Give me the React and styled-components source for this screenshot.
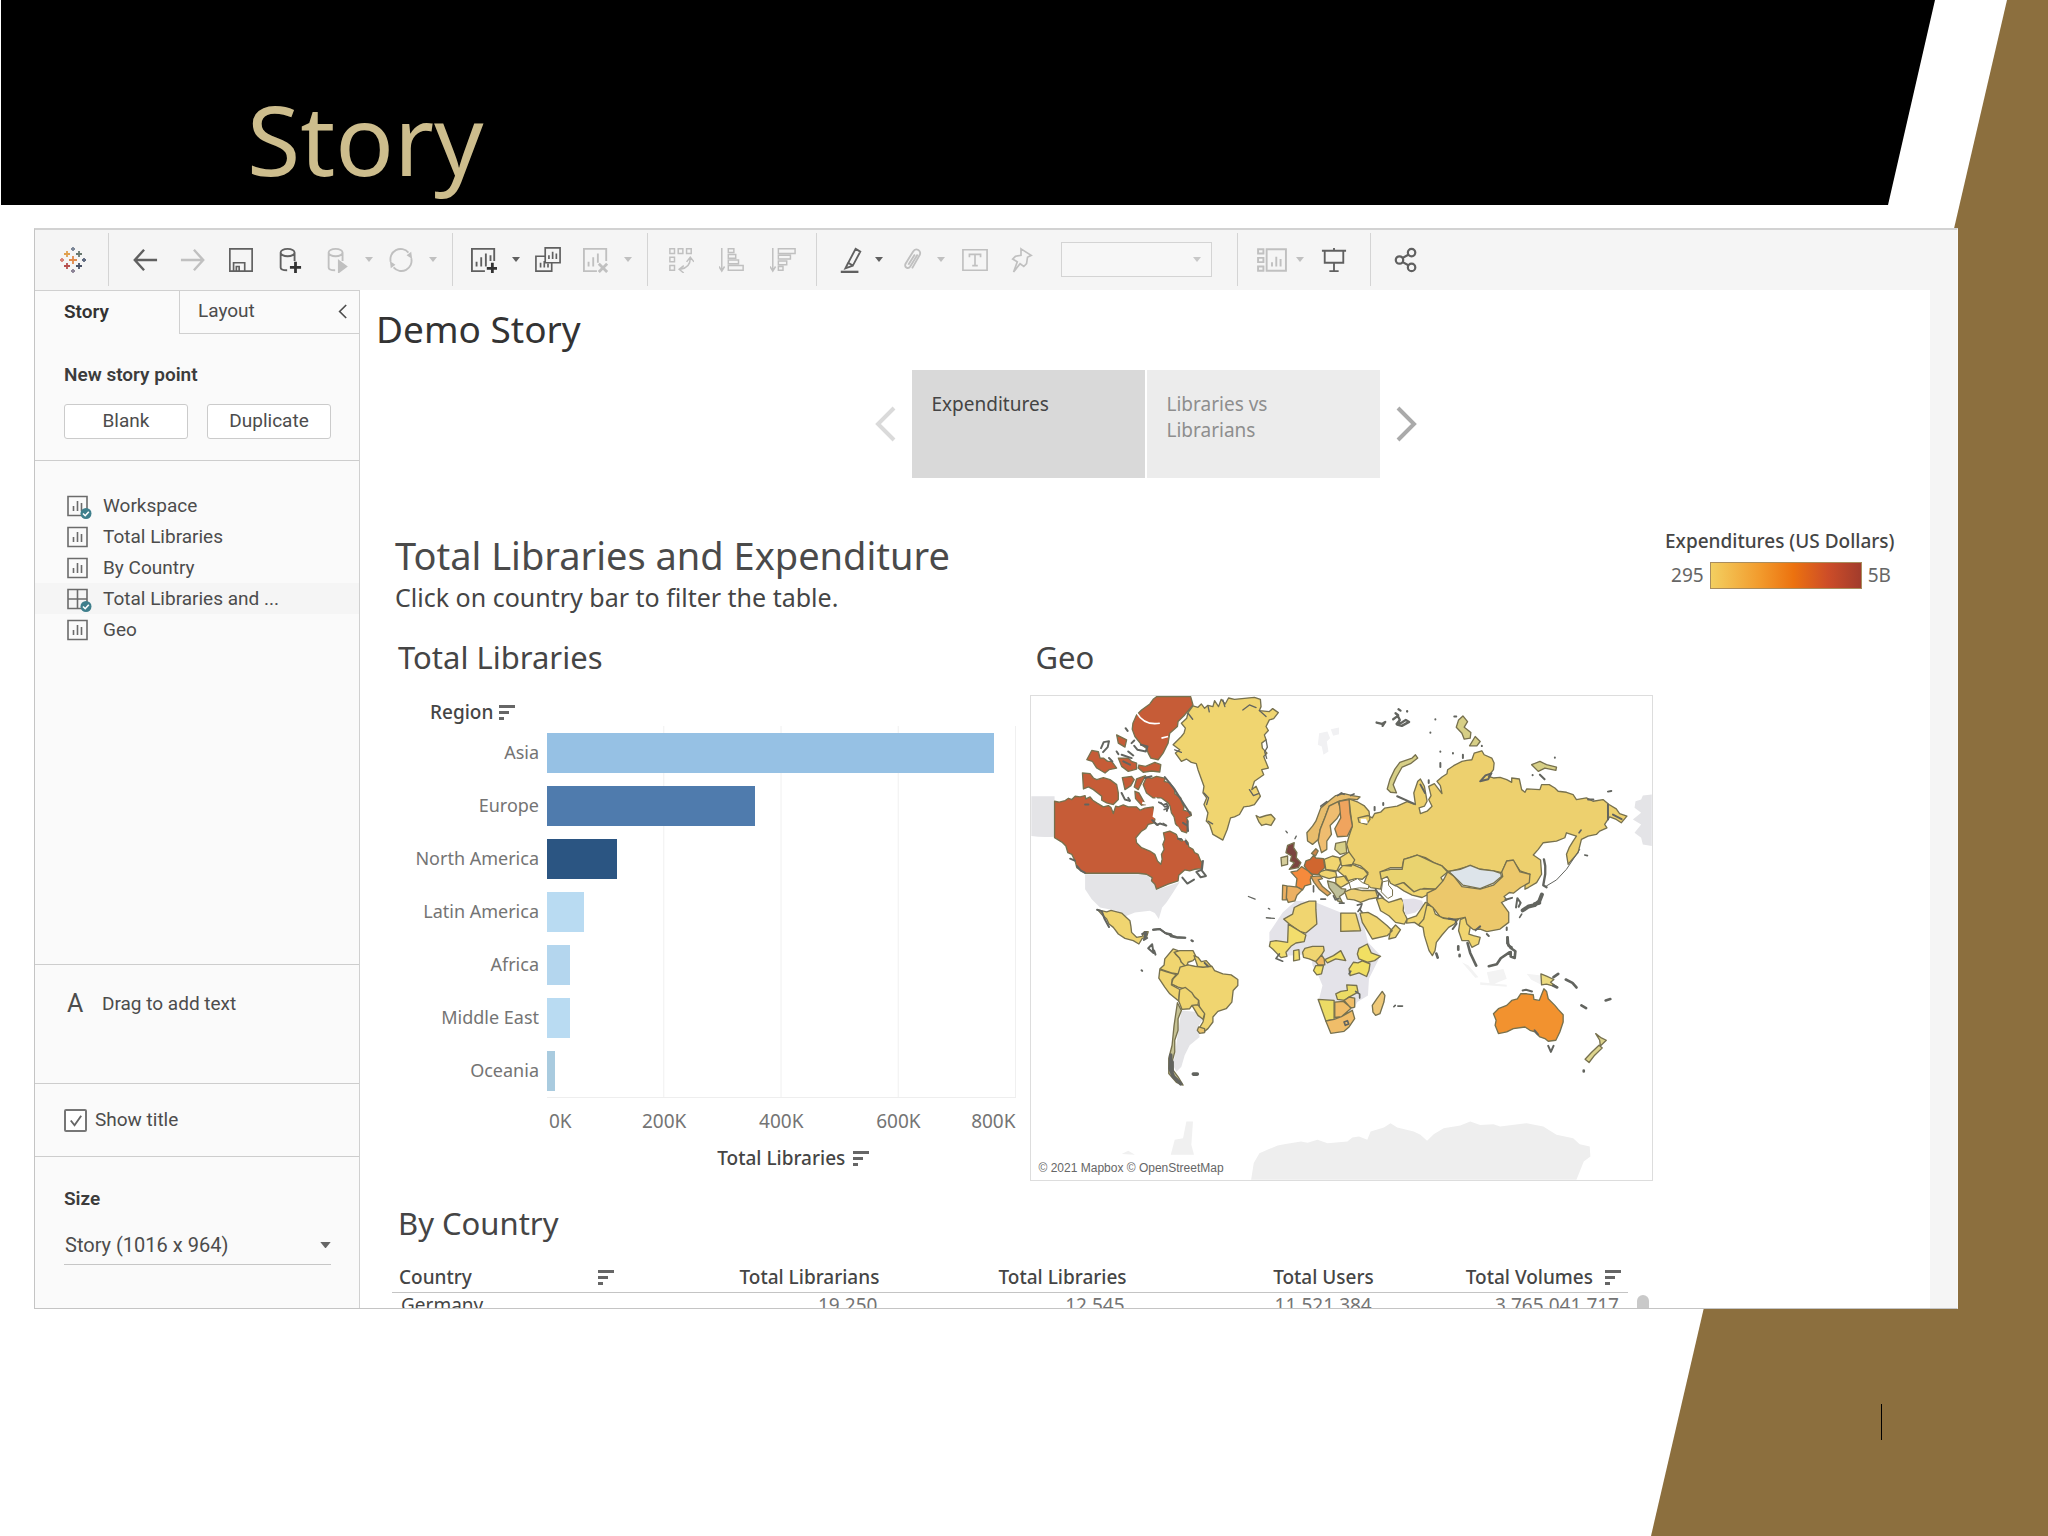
import React, {useState} from 'react';
import styled, {createGlobalStyle, css} from 'styled-components';

const regions = [
  {name: 'Asia', value: 764, color: '#96c1e4'},
  {name: 'Europe', value: 355, color: '#4f7bad'},
  {name: 'North America', value: 119, color: '#2b5582'},
  {name: 'Latin America', value: 63, color: '#b9dbf2'},
  {name: 'Africa', value: 40, color: '#b4d6ee'},
  {name: 'Middle East', value: 40, color: '#b9dbf2'},
  {name: 'Oceania', value: 13, color: '#a9cbdf'},
];

const sheets = [
  {name: 'Workspace', used: true},
  {name: 'Total Libraries'},
  {name: 'By Country'},
  {name: 'Total Libraries and ...', used: true, board: true},
  {name: 'Geo'},
];

const GlobalStyle = createGlobalStyle`
  * { box-sizing: border-box; }
  body { margin: 0; background: #fff; }
  button, input, select { font: inherit; color: inherit; }
  h1, h2, h3, p, ul { margin: 0; padding: 0; font-weight: 400; }
`

/* slide */

const Slide = styled.div`
  position: relative;
  display: flex;
  flex-direction: column;
  height: 100vh;
  min-height: 900px;
  overflow: hidden;
  background: #fff;
`

const Stripe = styled.div`
  position: absolute;
  inset: 0;
  background: #8c6f3e;
  clip-path: polygon(calc(100% - 41px) 0, 100% 0, 100% 100%, calc(100% - 397px) 100%);
`

const SlideHeader = styled.header`
  position: relative;
  flex: none;
  display: flex;
  align-items: flex-end;
  height: 205px;
  padding: 0 0 8px 247px;
  background: #000;
  clip-path: polygon(1px 0, calc(100% - 113px) 0, calc(100% - 160px) 100%, 1px 100%);
`

const SlideTitle = styled.h1`
  color: #cdbd8d;
  font-family: 'Noto Sans', 'Open Sans', sans-serif;
  font-size: 97px;
  line-height: 118px;
`

const SlideFooter = styled.footer`
  position: relative;
  flex: none;
  display: flex;
  justify-content: flex-end;
  height: 227px;
  padding: 95px 166px 0 0;
`

const Mark = styled.span`
  width: 1px;
  height: 36px;
  background: #000;
`

/* app window */

const Window = styled.div`
  position: relative;
  flex: 1;
  min-height: 0;
  display: flex;
  flex-direction: column;
  margin: 23px 90px 0 34px;
  background: #f5f5f5;
  border: 1px solid #c4c4c4;
  border-top: 2px solid #d2d2d2;
  border-right-color: #f8f8f8;
  overflow: hidden;
`

const Toolbar = styled.div`
  flex: none;
  display: flex;
  height: 60px;
  padding: 3px 0 4px;
`

const Tool = styled.button`
  flex: none;
  display: flex;
  align-items: center;
  justify-content: center;
  height: 100%;
  padding: 0;
  border: 0;
  background: none;
  color: ${props => props.$off ? '#c0c0c0' : '#606060'};
`

const CaretButton = styled(Tool)`
  width: 16px;
`

const Split = styled.div`
  display: flex;
`

const Group = styled.div`
  flex: none;
  display: flex;
  align-items: center;
  gap: ${props => props.$gap || 0}px;
  padding: 0 ${props => props.$right || 0}px 0 ${props => props.$left || 0}px;
  border-right: ${props => props.$last ? 0 : '1px solid #d4d4d4'};
  height: 100%;

  ${Tool}:not(${CaretButton}) { width: ${props => props.$compact ? 40 : 48}px; }
  ${Split} { height: 100%; }
`

const FitBox = styled.button`
  display: flex;
  align-items: center;
  justify-content: flex-end;
  width: 151px;
  height: 35px;
  margin-left: 14px;
  padding: 0 10px;
  color: #c8c8c8;
  background: #f7f7f7;
  border: 1px solid #d4d4d4;
`

const Body = styled.div`
  flex: 1;
  min-height: 0;
  display: flex;
`

const Sidebar = styled.aside`
  flex: none;
  display: flex;
  flex-direction: column;
  width: 325px;
  background: #fafafa;
  border-top: 1px solid #d0d0d0;
  border-right: 1px solid #d0d0d0;
  color: #4c4c4c;
  font-family: Roboto, 'Liberation Sans', sans-serif;
  font-size: 19px;
  line-height: 30px;
`

const Tabs = styled.div`
  display: flex;
  height: 43px;
`

const Tab = styled.button`
  padding: 0 0 2px;
  border: 0;
  background: none;
  text-align: left;
  ${props => props.$active ? css`
    width: 144px;
    padding-left: 29px;
    color: #333;
    font-weight: 600;
  ` : css`
    flex: 1;
    display: flex;
    align-items: center;
    justify-content: space-between;
    padding-left: 18px;
    padding-right: 12px;
    border-left: 1px solid #d0d0d0;
    border-bottom: 1px solid #d0d0d0;
  `}
`

const Section = styled.section`
  padding: ${props => props.$pad};
  border-bottom: ${props => props.$last ? 0 : '1px solid #cdcdcd'};
  ${props => props.$grow && 'flex: 1; min-height: 0;'}
`

const Label = styled.h3`
  color: #3c3c3c;
  font-size: 19px;
  line-height: 30px;
  font-weight: 600;
`

const Buttons = styled.div`
  display: grid;
  grid-template-columns: 1fr 1fr;
  gap: 19px;
  margin-top: 14px;
`

const Button = styled.button`
  height: 35px;
  padding: 0 0 2px;
  background: #fff;
  border: 1px solid #cbcbcb;
  border-radius: 3px;
`

const SheetRow = styled.li`
  display: flex;
  align-items: center;
  gap: 11px;
  height: 31px;
  padding-left: 31px;
  list-style: none;
  background: ${props => props.$hot ? '#f5f5f5' : 'none'};
`

const DragText = styled.div`
  display: flex;
  align-items: center;
  gap: 19px;
  height: 44px;

  b {
    width: 16px;
    font-size: 25px;
    font-weight: 400;
  }
`

const Check = styled.label`
  display: flex;
  align-items: center;
  gap: 8px;
  height: 24px;

  input {
    appearance: none;
    width: 23px;
    height: 23px;
    margin: 0;
    border: 2px solid #767676;
    border-radius: 2px;
    background: #fff;
  }
  input:checked {
    background: #fff url("data:image/svg+xml,%3Csvg xmlns='http://www.w3.org/2000/svg' viewBox='0 0 20 20'%3E%3Cpath d='M5 10l4 5 7-10' fill='none' stroke='%23666' stroke-width='2'/%3E%3C/svg%3E") center / contain no-repeat;
  }
`

const SizeField = styled.div`
  display: flex;
  align-items: center;
  margin-top: 12px;
  border-bottom: 1px solid #c6c6c6;
  color: #666;

  select {
    flex: 1;
    height: 38px;
    padding: 0 0 0 1px;
    appearance: none;
    border: 0;
    background: none;
    color: #4c4c4c;
    font-size: 20px;
  }
`

/* canvas */

const Canvas = styled.main`
  flex: 1;
  min-width: 0;
  min-height: 0;
  margin-right: 27px;
  padding: 14px 37px 0 32px;
  overflow: hidden;
  background: #fff;
  color: #454545;
  font-family: 'Noto Sans', 'Open Sans', sans-serif;
  font-size: 19px;
  line-height: 28px;
`

const StoryTitle = styled.h2`
  margin-left: -16px;
  color: #333;
  font-size: 37px;
  line-height: 50px;
`

const Navigator = styled.nav`
  display: flex;
  align-items: center;
  justify-content: center;
  gap: 16px;
  margin-top: 16px;
  padding-left: 6px;
`

const NavArrow = styled.button`
  display: flex;
  padding: 0;
  border: 0;
  background: none;
  color: ${props => props.$off ? '#dadada' : '#aaa'};
`

const Points = styled.div`
  display: flex;
  gap: 2px;
`

const Point = styled.button`
  width: 233px;
  height: 108px;
  padding: 21px 60px 0 20px;
  border: 0;
  background: ${props => props.$active ? '#d9d9d9' : '#ececec'};
  color: ${props => props.$active ? '#444' : '#8e8e8e'};
  display: flex;
  text-align: left;
  line-height: 26px;
`

const Dashboard = styled.div`
  display: flex;
  gap: 12px;
  margin-top: 48px;
`

const Main = styled.div`
  flex: 1;
  min-width: 0;
`

const BoardTitle = styled.h2`
  padding: 4px 0 0 3px;
  color: #4a4a4a;
  font-size: 38px;
  line-height: 50px;
`

const Hint = styled.p`
  padding-left: 3px;
  font-size: 25px;
  line-height: 34px;
`

const Charts = styled.div`
  display: grid;
  grid-template-columns: 1fr 1fr;
  gap: 14px;
  margin-top: 22px;
`

const Heading = styled.h3`
  padding-left: 6px;
  font-size: 31px;
  line-height: 42px;
`

const CountryHeading = styled(Heading)`
  margin-top: 21px;
`

const FieldName = styled.div`
  display: flex;
  align-items: center;
  gap: 6px;
  font-weight: 500;
  ${props => props.$axis ? 'justify-content: center; gap: 8px; padding-left: 24px;' : 'margin-top: 20px; padding-left: 38px;'}
`

const ChartBody = styled.div`
  display: grid;
  grid-template-columns: 147px 1fr;
  column-gap: 8px;
`

const RegionNames = styled.div`
  color: #747474;
  text-align: right;
  font-size: 18px;
  line-height: 53px;
`

const Plot = styled.div`
  border-bottom: 1px solid #eee;
  background-image: linear-gradient(to left, #f0f0f0 1px, transparent 1px);
  background-size: 25% 100%;
`

const BarRow = styled.div`
  display: flex;
  align-items: center;
  height: 53px;
`

const Bar = styled.div`
  height: 40px;
`

const Ticks = styled.div`
  grid-column: 2;
  display: grid;
  grid-template-columns: 1fr 2fr 2fr 2fr 1fr;
  color: #747474;
  line-height: 46px;
  text-align: center;

  span:first-child { text-align: left; padding-left: 2px; }
  span:last-child { justify-self: end; }
`

const MapBox = styled.div`
  position: relative;
  margin-top: 17px;
  border: 1px solid #ddd;

  svg { display: block; width: 100%; height: auto; }
`

const Credit = styled.small`
  position: absolute;
  left: 8px;
  bottom: 3px;
  color: #666;
  font-family: 'Liberation Sans', sans-serif;
  font-size: 12px;
  line-height: 18px;
`

const Legend = styled.div`
  flex: none;
  width: 228px;
  padding-top: 1px;
  font-weight: 500;
  white-space: nowrap;
`

const Scale = styled.div`
  display: flex;
  align-items: center;
  justify-content: center;
  gap: 6px;
  margin-top: 6px;
  padding-left: 4px;
  color: #666;
  font-weight: 400;
`

const Ramp = styled.span`
  width: 152px;
  height: 27px;
  border: 1px solid #a98d5e;
  background: linear-gradient(to right, #f3cf60, #f29a2c 33%, #ec720f 55%, #cd4d28 78%, #a23c2c);
`

const TableArea = styled.div`
  display: flex;
  align-items: flex-start;
  gap: 9px;
  margin-top: 19px;
`

const Table = styled.table`
  flex: 1;
  width: 100%;
  border-collapse: collapse;
  table-layout: fixed;

  th {
    height: 29px;
    padding: 0 7px;
    border-bottom: 1px solid #c4c4c4;
    font-weight: 500;
    text-align: right;
    white-space: nowrap;
  }
  td {
    height: 24px;
    padding: 0 9px;
    color: #747474;
    line-height: 24px;
    text-align: right;
  }
  th:first-child, td:first-child { text-align: left; }
  td:first-child { color: #454545; }
`

const Sorted = styled.span`
  display: flex;
  align-items: center;
  justify-content: ${props => props.$spread ? 'space-between' : 'flex-end'};
  gap: 12px;
  padding-right: ${props => props.$spread ? 18 : 0}px;
`

const Thumb = styled.div`
  flex: none;
  width: 12px;
  height: 60px;
  margin-top: 32px;
  margin-right: 4px;
  border-radius: 6px;
  background: #c9c9c9;
`

const Icon = ({children, size = 26, width = 2}) => (
  <svg width={size} height={size} viewBox="0 0 28 28" fill="none" stroke="currentColor" strokeWidth={width}>
    {children}
  </svg>
)

const Caret = ({size = 8}) => (
  <svg width={size} height={size / 2 + 1} viewBox="0 0 8 5"><path d="M0 0h8L4 5z" fill="currentColor" /></svg>
)

const SortIcon = () => (
  <svg width="16" height="15" viewBox="0 0 16 15" fill="#666">
    <path d="M0 0h16v3H0zM0 6h10v3H0zM0 12h5v3H0z" />
  </svg>
)

const plus = (x, y, r, color) => (
  <path key={`${x}-${y}`} d={`M${x - r} ${y}h${2 * r}M${x} ${y - r}v${2 * r}`} stroke={color} />
)

const Logo = () => (
  <Icon size={28} width={1.8}>
    {plus(14, 14, 4, '#e08a4a')}
    {plus(8, 8, 3, '#e0a04e')}
    {plus(20, 8, 3, '#68786f')}
    {plus(8, 20, 3, '#b8504e')}
    {plus(20, 20, 3, '#4b5468')}
    {plus(14, 3, 2, '#7c8798')}
    {plus(14, 25, 2, '#8d8497')}
    {plus(3, 14, 2, '#d88478')}
    {plus(25, 14, 2, '#5f6a80')}
  </Icon>
)

const SheetIcon = ({board, used}) => (
  <svg width="26" height="26" viewBox="0 0 26 26" fill="none" stroke="#6b6b6b" strokeWidth="1.6">
    <path d="M2 3.500h19v19H2z" />
    {board ? <path d="M11.500 3.500v19M2 13h19" /> : <path d="M7.500 18v-5M11.500 18V8M15.500 18v-8" />}
    {used && <>
      <circle cx="20" cy="20.500" r="5.500" fill="#3f7f8c" stroke="none" />
      <path d="M17 20.500l2.200 2.200 3.600-4" stroke="#fff" />
    </>}
  </svg>
)

const Chevron = ({left, width = 22, height = 38, stroke = 4}) => (
  <svg width={width} height={height} viewBox="0 0 22 38" fill="none" stroke="currentColor" strokeWidth={stroke}>
    <path d={left ? 'M20 3L4 19l16 16' : 'M2 3l16 16L2 35'} />
  </svg>
)

const Cylinder = () => <path d="M5 6v16c0 2 3 3 7 3M5 6c0-2 3-4 7.500-4S20 4 20 6s-3 4-7.500 4S5 8 5 6zM20 6v9" />

const Tools = () => (
  <Toolbar role="toolbar">
    <Group $left={14} $right={11}><Tool aria-label="Home"><Logo /></Tool></Group>
    <Group $left={12} $right={11}>
      <Tool aria-label="Undo"><Icon width={2.6}><path d="M27 14H3M13 3L3 14l10 11" /></Icon></Tool>
      <Tool $off aria-label="Redo"><Icon width={2.6}><path d="M1 14h24M15 3l10 11-10 11" /></Icon></Tool>
      <Tool aria-label="Save"><Icon width={1.8}><path d="M2 2h24v24H2zM6 26v-9h12v9M9 26v-5h3v5" /></Icon></Tool>
      <Tool aria-label="New data source"><Icon><Cylinder /><path d="M21 16v12M15 22h12" stroke="#333" strokeWidth="3" /></Icon></Tool>
      <Split>
        <Tool $off aria-label="Run updates"><Icon><Cylinder /><path d="M16 15l8 6-8 6z" fill="currentColor" /></Icon></Tool>
        <CaretButton $off aria-label="Update options"><Caret /></CaretButton>
      </Split>
      <Split>
        <Tool $off aria-label="Refresh"><Icon><path d="M3 16a11 11 0 0 1 19-10M25 12a11 11 0 0 1-19 10" /><path d="M26 13l-6-4 5-4zM2 15l6 4-5 4z" fill="currentColor" stroke="none" /></Icon></Tool>
        <CaretButton $off aria-label="Refresh options"><Caret /></CaretButton>
      </Split>
    </Group>
    <Group $left={7} $right={11}>
      <Split>
        <Tool aria-label="New worksheet"><Icon><path d="M15 26H1V2h24v13M6 21v-5M11 21V11M16 21V7M21 15V9" /><path d="M23 17v11M17 23h11" stroke="#333" strokeWidth="3" /></Icon></Tool>
        <CaretButton aria-label="New sheet options"><Caret /></CaretButton>
      </Split>
      <Tool aria-label="Duplicate"><Icon width={1.8}><path d="M11 1h16v16H11zM11 10H1v16h17v-9M15 13V9M19 13V5M23 13V7M6 22v-5M10 22v-7M14 22v-4" /></Icon></Tool>
      <Split>
        <Tool $off aria-label="Clear sheet"><Icon><path d="M15 26H1V2h24v13M6 21v-5M11 21V11M16 17V7" /><path d="M17 18l9 9M26 18l-9 9" strokeWidth="3" /></Icon></Tool>
        <CaretButton $off aria-label="Clear options"><Caret /></CaretButton>
      </Split>
    </Group>
    <Group $left={9} $right={9} $gap={3}>
      <Tool $off aria-label="Swap rows and columns"><Icon width={1.6}><path d="M2 2h5v5H2zM11 2h5v5h-5zM20 2h5v5h-5zM2 11h5v5H2zM2 20h5v5H2zM24 12c0 8-4 11-11 12M20 16l4-5 4 5M17 20l-5 4 5 4" /></Icon></Tool>
      <Tool $off aria-label="Sort ascending"><Icon width={1.6}><path d="M3 1v24M0 21l3 5 3-5M10 2h6v4h-6zM10 8h8v4h-8zM10 14h11v4H10zM10 20h16v5H10z" /></Icon></Tool>
      <Tool $off aria-label="Sort descending"><Icon width={1.6}><path d="M3 1v24M0 21l3 5 3-5M9 2h18v5H9zM9 9h13v4H9zM9 15h9v4H9zM9 21h5v4H9z" /></Icon></Tool>
    </Group>
    <Group $left={14} $right={25} $gap={6} $compact>
      <Split>
        <Tool aria-label="Highlight"><Icon><path d="M19 2l5 3-8 15-5-3zM11 17l-3 6 8-3" /><path d="M3 27h19" strokeWidth="3" /></Icon></Tool>
        <CaretButton aria-label="Highlight options"><Caret /></CaretButton>
      </Split>
      <Split>
        <Tool $off aria-label="Group members"><Icon><path d="M19 8l-8 13c-2 3-7 1-5-3l8-13c3-5 10-1 7 4l-8 14M16 8L9 19" /></Icon></Tool>
        <CaretButton $off aria-label="Group options"><Caret /></CaretButton>
      </Split>
      <Tool $off aria-label="Show mark labels"><Icon width={1.8}><path d="M1 3h26v22H1zM8 11V8h12v3M14 8v12M11 20h6" /></Icon></Tool>
      <Tool $off aria-label="Fix axes"><Icon width={1.8}><path d="M14 2l11 7-4 2-1 7-3 3-4-3-7 9 4-11-5-3 3-3 6-1z" /></Icon></Tool>
      <FitBox aria-label="Fit"><Caret /></FitBox>
    </Group>
    <Group $left={14} $right={16} $gap={6} $compact>
      <Split>
        <Tool $off aria-label="Show cards"><Icon size={30} width={1.8}><path d="M1 4h5v4H1zM1 12h5v4H1zM1 20h5v4H1zM9 4h18v20H9zM14 20v-4M18 20v-9M22 20v-7" /></Icon></Tool>
        <CaretButton $off aria-label="Card options"><Caret /></CaretButton>
      </Split>
      <Tool aria-label="Presentation mode"><Icon><path d="M1 4h26M4 4v13h20V4M14 1v3M14 17v8M9 26h10" /></Icon></Tool>
    </Group>
    <Group $left={15} $compact $last>
      <Tool aria-label="Share"><Icon width={2.4}><circle cx="7" cy="14" r="4" /><circle cx="20" cy="6" r="4" /><circle cx="20" cy="22" r="4" /><path d="M10 12l7-4M10 16l7 4" /></Icon></Tool>
    </Group>
  </Toolbar>
)

const Country = styled.path`
  fill: ${props => props.$c || '#f0d570'};
  stroke: #77714e;
  stroke-width: 4;
  stroke-linejoin: round;
`

const Land = styled.path`
  fill: ${props => props.$c || '#e4e4e7'};
`

const Isles = styled.path`
  fill: none;
  stroke: #62645f;
  stroke-width: ${props => props.$w || 6};
  stroke-linecap: round;
  stroke-linejoin: round;
`

const red = '#c65c37'
const sand = '#ecc56c'

const WorldMap = () => (
  <svg viewBox="0 0 624 486" role="img" aria-label="Expenditures by country">
    <g transform="translate(-9 -6) scale(.3333)">
      <Land d="M28 320H98V442Q60 445 28 440zM190 555L375 555 390 570 405 602 440 590 475 578 455 610 435 640 422 655 412 690 400 672 385 665 340 670 310 682 285 665 235 655 210 630 190 600z" />
      <Land $c="#f1f1f3" d="M895 130l25-5 8 20-10 10 5 30-15 10-5-25-12-5zM930 118l25-5v20l-18 5z" />
      <Country $c={red} d="M98 335L112 338 130 333 140 326 150 330 160 320 175 322 190 318 192 328 205 322 213 332 225 340 245 352 260 348 268 354 275 372 282 350 290 352 305 346 320 352 345 352 356 362 370 356 395 352 402 380 398 400 380 405 372 418 360 425 343 445 345 460 360 475 385 485 400 495 408 515 418 525 422 510 420 495 428 480 424 465 430 450 426 430 445 425 465 435 470 448 480 455 492 450 500 460 502 472 515 480 520 490 530 495 536 510 542 520 540 538 520 540 505 545 490 542 472 558 470 575 440 585 405 600 400 585 390 575 392 565 375 555 350 552 190 552 165 535 160 515 150 495 138 490 132 470 120 458 98 445z" />
      <Country $c={red} d="M182 250L205 252 215 265 225 270 245 264 265 270 285 285 290 310 290 330 275 345 255 340 240 332 240 320 215 300 200 292 185 298z" />
      <Country $c={red} d="M375 262L390 266 405 260 432 266 428 275 445 280 460 300 460 312 478 325 482 340 488 352 486 362 508 368 510 378 495 385 500 395 496 430 480 425 462 402 458 382 450 370 446 350 440 340 420 325 395 325 375 310 365 285z" />
      <Country $c={red} d="M302 264L330 260 338 270 328 288 310 300zM345 268L372 258 355 290 350 300 338 292zM340 305l12 5 20 35-12 2-18-20z" />
      <Country $c={red} d="M395 28L405 20 508 20 515 45 490 75 470 95 468 110 445 130 440 160 425 190 410 210 388 205 380 190 375 176 360 165 340 140 332 118 334 100 345 75 360 60 385 42z" />
      <Country $c={red} d="M352 226L372 230 400 218 418 225 415 247 390 244 365 248 350 235zM195 210L210 182 230 186 235 205 245 205 258 215 270 215 285 235 262 240 250 250 225 235 212 215zM285 135L315 150 310 172 290 160zM290 205L320 205 330 215 345 220 345 238 320 245 300 230z" />
      <Isles d="M238 175l8-18 16-3-4 18-14 15M262 205l10 10M300 195l30 10M338 168l10 12 25 5 5-15-20-5M312 115l6 8M330 160l8-8M320 185l15 12M285 185l5 8M305 215l20 10M418 340l10 12 12-2-4 14M392 392l14 14 10-4 18 6M300 310l10 20 14 4M485 400l12 8" />
      <Isles d="M320 325l5 8M370 265l20-5M430 262l28 35 24 38 26 40M498 395l2 30M470 448l20 2 8 14M545 515l-3 25M483 565l15 18 20-12M525 548l15-6 14 18-16 4zM145 508l14 6M165 530l12 14 12 6M190 345h10" />
      <path d="M345 68Q368 108 415 100M440 140l-20 5" fill="none" stroke="#fff" strokeWidth="5" />
      <path d="M362 340l22 4M405 330l-8 50 30 20 2-40zM428 400l40 15 22 38" fill="#fff" stroke="#fff" strokeWidth="7" />
      <Isles $w={5} d="M412 338l14 8 10-4 4 14-12 4M395 395l14 12M425 402l10 6" />
      <Country d="M500 68L515 48 530 52 540 42 550 55 560 46 575 50 580 32 592 50 600 28 612 42 622 24 640 28 700 22 718 28 720 50 715 62 745 65 755 56 772 68 758 86 745 90 735 110 742 122 730 135 735 150 722 160 724 175 738 190 728 200 742 235 722 240 728 255 700 275 692 300 705 290 718 320 700 345 685 350 668 352 655 375 640 382 628 385 618 420 605 452 575 435 565 405 555 395 560 370 548 345 556 325 545 310 548 290 530 240 525 222 510 218 495 208 480 215 462 190 475 180 455 165 480 140 488 130 492 115 480 100 496 85z" />
      <Isles $w={4} d="M500 70l14 18M560 48l4 18M605 30l6 20M665 60l20-15 20 8M715 62l20 18M685 300l12 18 15-6M735 150l4 22-8 14 6 20M548 310l14 15-6 20M560 395l14 8M460 180l20 8" />
      <Country $c="#ead277" d="M705 378L716 384 735 378 750 375 762 388 750 408 735 404 722 408 714 398z" />
      <Country $c="#7b4540" d="M800 468L820 460 818 475 828 490 826 505 840 520 832 535 805 540 820 520 808 515 812 500 795 490z" />
      <Country $c="#d5cd9a" d="M780 505L800 500 800 525 782 530z" />
      <Isles $w={4} d="M795 425l4 5M826 440l-4 8M682 622l20 8M736 686l24 2M742 658l4 2" />
      <Country d="M228 662L255 668 268 664 300 672 325 695 328 712 330 730 345 745 362 742 368 728 380 728 375 745 362 748 352 765 335 755 310 748 290 735 275 715 262 705 255 690 242 678z" />
      <Isles d="M226 662l14 4 8 22 14 26M362 735l12-6-6 14M395 722l20-2 16 12 18 4M445 738l20 6 26 2M512 755l2 2" />
    </g>

    <g transform="translate(-9 164) scale(.3333)">
      <Land d="M480 455L530 460 545 480 530 505 535 535 505 560 490 590 480 625 465 640 455 620 460 590 470 520z" />
      <Land $c="#f0f0f0" d="M448 890L460 845 485 840 495 790 515 790 510 860 518 890zM300 888l20-10 20 12z" />
      <Country d="M430 300L455 270 470 275 462 285 475 298 480 310 500 318 470 345 450 342 415 330 428 318z" />
      <Country d="M458 280L475 275 515 275 525 295 515 305 500 310 495 325 480 310 475 298z" />
      <Country d="M518 290L530 295 540 308 555 305 572 325 550 326 530 325z" />
      <Country d="M470 345L476 325 500 318 520 322 545 325 572 322 580 335 605 345 630 348 650 362 650 380 636 395 632 430 615 450 590 458 575 475 575 490 560 510 545 522 530 515 545 490 550 468 535 448 532 425 515 410 490 390 470 385 450 375 455 360z" />
      <Country d="M415 332L438 340 465 347 452 362 450 378 475 392 472 427 445 405 430 385 412 358z" />
      <Country d="M475 392L492 386 512 402 520 415 532 425 530 438 512 440 505 450 482 452 472 427zM512 440L530 438 550 465 545 482 530 470z" />
      <Country $c={sand} d="M532 505L550 510 550 522 535 524 528 515z" />
      <Country $c="#c6c294" d="M468 432L480 455 470 480 470 515 460 545 460 580 452 610 455 635 470 655 485 680 465 672 442 645 442 600 452 560 458 500z" />
      <Isles $w={11} d="M448 590l-2 40 10 24 22 22M452 610v30M516 647h12" />
      <Isles d="M395 212l20-2 20 14 16 4M448 232l20 4 24 0M380 268l12-12 4 26zM398 275l4 12M360 334l2 2M510 244l4 2M375 225l-8 18 10-6M550 312l10 10" />
    </g>

    <g transform="translate(251 164) scale(.3333)">
      <Land $c="#e4e3e9" d="M-35 220L5 160 45 125 105 130 180 160 235 165 250 200 262 250 300 290 265 360 262 410 230 430 215 460 150 440 115 420 125 380 110 345 95 320 90 285 30 290 -5 290 -35 250z" />
      <Land $c="#eee" d="M-90 965L-82 915 -65 885 -10 862 10 858 60 850 80 854 110 845 140 855 200 850 215 838 235 835 260 845 270 820 310 808 330 795 350 808 400 820 420 830 440 848 460 828 490 810 540 802 570 790 600 800 640 798 660 805 740 795 790 805 830 830 880 840 900 858 930 865 932 895 912 910 890 965z" />
      <Land $c="#f3f3f3" d="M545 310l20 10 30 35-10 2zM620 340l50-10 10 30-50 20zM600 370l80 8v6l-80-6zM740 345l44 5v28l-30-15z" />
      <Country d="M8 180L35 165 40 145 60 135 85 126 105 126 105 150 108 195 75 222 58 218 25 195z" />
      <Country $c="#f2dd6c" d="M22 195L75 228 70 248 45 252 30 262 15 280 18 292 0 296 -25 270 -35 262 -32 248 -15 245 20 250zM38 275L54 272 56 302 38 306z" />
      <Country d="M65 280L72 268 95 262 128 262 130 275 118 295 105 308 85 300 68 295zM180 162L225 162 240 215 180 217z" />
      <Country $c="#efb860" d="M105 308L122 288 130 300 132 318 112 318z" />
      <Country $c="#f1df62" d="M105 320L128 320 122 345 108 348 98 335zM132 302L158 290 180 275 195 305 165 300 140 312zM235 268L260 255 272 282 300 292 282 305 262 310 235 300 230 285zM205 330L218 310 232 312 245 306 268 315 265 335 258 353 235 342 208 350z" />
      <Country $c="#ecdc65" d="M165 405L180 398 200 395 198 378 228 380 232 400 205 415 192 425 170 422zM112 422L160 425 160 482 135 487z" />
      <Country $c="#f0bd69" d="M162 430L188 428 212 448 182 474 162 476zM190 425L205 415 222 418 222 445 210 448zM135 487L160 482 182 474 215 455 222 480 205 505 190 518 150 524z" />
      <Country $c="#efc979" d="M275 440L290 418 305 398 313 410 310 430 298 465 285 470 277 460z" />
      <Isles $w={5} d="M205 345l5-8M225 398l12 8v12M190 490l10-4 4 10-10 4zM-5 285l-10 14 20 8M340 444l4-4M352 442l14 0" />
      <Country $c="#f2922f" d="M640 465L655 450 680 440 695 425 712 420 722 405 740 405 760 408 762 422 778 425 786 405 792 390 800 398 805 420 825 440 835 452 850 468 850 490 840 520 828 545 805 548 795 540 780 535 765 520 750 515 735 505 700 510 680 520 655 525 645 500 648 485z" />
      <Isles d="M728 395l10-2 18 5M805 562l8 18 8-18M764 515l10 12" />
      <Country $c="#ecdb7f" d="M783 345L800 352 822 362 812 370 832 385 800 376 785 378z" />
      <Country $c="#ddd48d" d="M958 560L968 568 945 590 928 612 916 602 935 582zM948 525L965 538 980 545 962 562 960 545z" />
      <Isles $w={8} d="M562 252l8 30 18 38M626 322l24-6 12-18 26-18M682 235v18l10 14 14 10-2 20-12-4 0-14M835 345l-14 10M858 362l20 10 12 14M905 440l14 8M978 425l14-4M912 636v3M534 262v10M538 288v4M468 284l4 12M820 380l12 6" />
    </g>

    <g transform="translate(251 -6) scale(.3333)">
      <Land d="M1117 315L1090 318 1085 330 1068 335 1065 355 1085 370 1060 390 1085 405 1065 430 1085 445 1090 465 1117 470z" />
      <Country $c="#edd06e" d="M205 328L232 338 250 348 265 365 268 390 258 405 235 398 232 385 262 378 275 385 282 372 300 368 312 356 350 350 380 336 405 345 400 310 412 275 420 268 432 290 440 335 432 350 416 355 420 372 440 365 455 350 445 330 452 318 445 290 462 282 485 312 480 288 470 275 485 262 500 252 502 240 520 228 545 215 560 212 575 210 582 190 605 183 612 195 635 205 642 220 640 240 625 260 640 265 660 263 680 270 695 278 695 265 718 268 725 300 735 308 740 298 780 300 785 285 808 285 825 295 835 305 860 308 880 315 890 330 920 325 940 335 970 330 988 345 1010 358 1020 372 1042 380 1025 400 1010 390 990 382 975 405 982 415 960 425 950 435 925 440 905 450 895 490 865 525 860 495 868 475 880 455 890 440 860 430 855 445 830 455 790 460 775 480 760 497 782 512 785 555 770 580 745 595 735 600 735 570 750 555 720 545 700 515 680 515 665 550 640 545 600 540 570 530 505 548 485 530 460 520 435 505 410 497 370 510 365 535 330 535 300 548 305 575 300 600 270 595 250 582 262 550 240 530 215 522 205 490 198 465 205 440 215 410 208 360z" />
      <path d="M240 400l22 2-6-14-16 0z" fill="#fff" />
      <Country $c="#e8bd6c" d="M78 430L95 410 105 395 120 355 150 330 165 318 190 312 215 318 238 322 230 330 205 328 175 335 145 350 132 385 118 420 112 450 95 465 80 455z" />
      <Country $c="#efbd70" d="M145 350L172 336 182 365 168 388 148 408 152 435 138 455 138 480 122 490 112 455 118 420 132 385z" />
      <Country $c="#f0a45e" d="M175 335L205 330 208 370 215 410 200 440 170 442 162 418 180 385z" />
      <Country $c="#d8d087" d="M165 462L195 456 198 490 178 495 162 480z" />
      <Country d="M130 510L155 500 175 505 180 522 168 545 135 540zM178 505L205 488 222 512 212 530 182 528zM172 545L185 530 215 525 250 540 262 555 245 570 225 568 200 575 190 560zM165 565L195 560 205 580 180 595 165 582zM110 550L135 542 165 548 168 562 145 568 120 560z" />
      <Country $c="#bfc09b" d="M140 575L160 580 182 598 195 600 190 612 176 622 185 640 170 635 160 615 145 595z" />
      <Country $c="#eecf72" d="M192 608L215 598 245 604 285 604 292 625 265 630 240 640 220 632 200 630z" />
      <Country $c="#d0662f" d="M75 515L88 510 98 498 105 506 128 508 132 535 118 548 112 556 95 555 80 545 70 530z" />
      <Country $c="#c9854a" d="M92 492L105 478 112 485 104 500z" />
      <Country $c="#f58a3c" d="M30 548L48 545 62 532 82 545 95 558 88 570 90 585 72 590 65 602 45 592 48 568z" />
      <Country $c="#ecb062" d="M18 590L50 594 64 602 48 618 42 635 22 640 16 625zM5 588L18 590 16 632 4 632z" />
      <Country $c="#e1a45a" d="M90 562L118 560 125 568 112 572 125 592 150 612 140 620 115 600 100 580z" />
      <Isles $w={5} d="M98 590v18M120 630l14 0M176 642h14M230 648l14-4-6 18 8 10M240 655l-8 12M285 600l10 15-6 16M295 612l14 16M158 620l6 12 10-4M120 350l18-14M170 318l12-8 8 4M210 318l10-5" />
      <path d="M205 580l26-12 14 12 20 8-2 10-26-2-26 4zM306 578l18-4 0 14 12 14 0 18-14 8-20-20z" fill="#fff" stroke="#77714e" strokeWidth="3" />
      <Country $c="#e9d36f" d="M298 548L330 540 365 540 370 510 388 505 410 497 435 508 460 520 485 530 502 548 482 565 490 580 465 600 430 598 405 612 370 580 345 590 330 582 320 562 302 570z" />
      <Country d="M345 588L368 580 400 608 420 600 462 600 445 615 425 625 395 618 370 605zM288 630L305 626 325 640 362 628 370 640 368 665 380 690 372 705 345 700 325 680 300 665z" />
      <Land $c="#e3e0e8" d="M366 630L400 628 425 635 430 650 405 670 375 678z" />
      <Country d="M380 690L408 680 425 655 435 640 455 648 440 665 430 690 420 712 402 700 378 702z" />
      <Country $c="#ecc86b" d="M440 612L465 600 488 575 502 548 520 560 545 592 600 600 640 588 668 562 665 548 680 515 700 512 720 548 750 555 748 580 722 595 700 612 688 610 672 622 680 632 664 640 686 670 686 700 660 720 620 728 600 720 580 722 558 705 555 685 520 692 480 684 462 660 440 640z" />
      <Land $c="#dde4ea" d="M510 546L540 540 570 528 600 540 640 545 662 552 664 562 640 582 600 598 548 588 530 570z" />
      <path d="M505 546L540 540 570 528 600 540 640 545 662 552 664 562 640 582 600 598 548 588 530 570z" fill="none" stroke="#77714e" strokeWidth="4" />
      <Country d="M440 645L458 655 465 675 490 688 520 692 535 690 522 705 505 715 485 738 468 760 464 785 456 800 446 785 432 740 428 715 414 708 430 690zM540 692L555 685 560 705 570 715 566 735 580 740 600 745 595 765 575 775 565 755 545 755 535 725zM238 672L262 670 290 685 320 710 335 725 320 740 275 750 260 725 245 700zM330 725L345 708 360 722 345 745 325 750z" />
      <Isles d="M505 688l20 4 4 12-12 16M600 712l-14 12M676 632l20-6M708 655l4-28 10 14-6 12M620 735l6 6M680 715v8" />
      <Isles $w={12} d="M728 664l18-12 18-4 14-12 8-20M764 645l14-4" />
      <Isles $w={7} d="M792 510l4 20 0 24-6 34 10 6M683 745l2 25 10 5" />
      <Isles $w={3} d="M800 590l30-18 30-32 40-60" />
      <Isles $w={5} d="M725 675l-6 10M898 430l6-8M915 497l8 2" />
      <Country $c="#d7cf86" d="M320 298L328 270 342 240 358 218 395 205 405 195 412 205 390 222 365 232 348 262 338 285 348 310 330 308zM528 112L535 90 548 78 562 95 552 112 572 128 570 145 552 148 545 130zM568 168L585 140 600 155 590 168zM755 225L780 215 800 225 830 232 828 242 795 235 775 245z" />
      <Isles $w={7} d="M288 98l16 4 10-6-8 12M338 88l14-10 6 12-10 12 16-4 12-8 10 6-22 12-14-4M354 58l6 4M380 64v1M345 70l8 6" />
      <Isles $w={6} d="M465 88v1M450 128v1M480 185v1M518 190v1M548 195v10M480 220v12M522 80h6M605 168v1M780 255l14 14M758 256v1M825 203v1M985 306l10-2M350 320l50 22M282 352v10M308 340v6M445 272v8M925 330h16M600 275l16-18 18-6-10 18zM985 345v45M420 285l14 25M1000 375l26 14" />
    </g>
  </svg>
)

const App = () => {
  const [showTitle, setShowTitle] = useState(true)

  return (
    <Slide>
      <GlobalStyle />
      <Stripe />
      <SlideHeader><SlideTitle>Story</SlideTitle></SlideHeader>
      <Window>
        <Tools />
        <Body>
          <Sidebar>
            <Tabs>
              <Tab $active>Story</Tab>
              <Tab>Layout <Chevron left width={9} height={17} /></Tab>
            </Tabs>
            <Section $pad="26px 28px 21px 29px">
              <Label>New story point</Label>
              <Buttons>
                <Button>Blank</Button>
                <Button>Duplicate</Button>
              </Buttons>
            </Section>
            <Section as="ul" $pad="29px 0 0" $grow>
              {sheets.map(sheet => (
                <SheetRow key={sheet.name} $hot={sheet.board}>
                  <SheetIcon board={sheet.board} used={sheet.used} />{sheet.name}
                </SheetRow>
              ))}
            </Section>
            <Section $pad="17px 29px 57px 32px">
              <DragText><b>A</b>Drag to add text</DragText>
            </Section>
            <Section $pad="24px 29px">
              <Check>
                <input type="checkbox" checked={showTitle} onChange={() => setShowTitle(!showTitle)} />
                Show title
              </Check>
            </Section>
            <Section $pad="27px 28px 43px 29px" $last>
              <Label as="label" htmlFor="size">Size</Label>
              <SizeField>
                <select id="size"><option>Story (1016 x 964)</option></select>
                <Caret size={11} />
              </SizeField>
            </Section>
          </Sidebar>
          <Canvas>
            {showTitle && <StoryTitle>Demo Story</StoryTitle>}
            <Navigator>
              <NavArrow $off aria-label="Previous"><Chevron left /></NavArrow>
              <Points>
                <Point $active>Expenditures</Point>
                <Point>Libraries vs Librarians</Point>
              </Points>
              <NavArrow aria-label="Next"><Chevron /></NavArrow>
            </Navigator>
            <Dashboard>
              <Main>
                <BoardTitle>Total Libraries and Expenditure</BoardTitle>
                <Hint>Click on country bar to filter the table.</Hint>
                <Charts>
                  <div>
                    <Heading>Total Libraries</Heading>
                    <FieldName>Region <SortIcon /></FieldName>
                    <ChartBody>
                      <RegionNames>
                        {regions.map(region => <div key={region.name}>{region.name}</div>)}
                      </RegionNames>
                      <Plot>
                        {regions.map(region => (
                          <BarRow key={region.name}>
                            <Bar style={{width: `${region.value / 8}%`, background: region.color}} />
                          </BarRow>
                        ))}
                      </Plot>
                      <Ticks>
                        <span>0K</span><span>200K</span><span>400K</span><span>600K</span><span>800K</span>
                      </Ticks>
                      <span />
                      <FieldName $axis>Total Libraries <SortIcon /></FieldName>
                    </ChartBody>
                  </div>
                  <div>
                    <Heading>Geo</Heading>
                    <MapBox>
                      <WorldMap />
                      <Credit>© 2021 Mapbox © OpenStreetMap</Credit>
                    </MapBox>
                  </div>
                </Charts>
                <CountryHeading>By Country</CountryHeading>
                <TableArea>
                  <Table>
                    <thead>
                      <tr>
                        <th><Sorted $spread>Country <SortIcon /></Sorted></th>
                        <th>Total Librarians</th>
                        <th>Total Libraries</th>
                        <th>Total Users</th>
                        <th><Sorted>Total Volumes <SortIcon /></Sorted></th>
                      </tr>
                    </thead>
                    <tbody>
                      <tr>
                        <td>Germany</td>
                        <td>19,250</td>
                        <td>12,545</td>
                        <td>11,521,384</td>
                        <td>3,765,041,717</td>
                      </tr>
                    </tbody>
                  </Table>
                  <Thumb />
                </TableArea>
              </Main>
              <Legend>
                Expenditures (US Dollars)
                <Scale>295 <Ramp /> 5B</Scale>
              </Legend>
            </Dashboard>
          </Canvas>
        </Body>
      </Window>
      <SlideFooter><Mark /></SlideFooter>
    </Slide>
  )
}

export default App;
